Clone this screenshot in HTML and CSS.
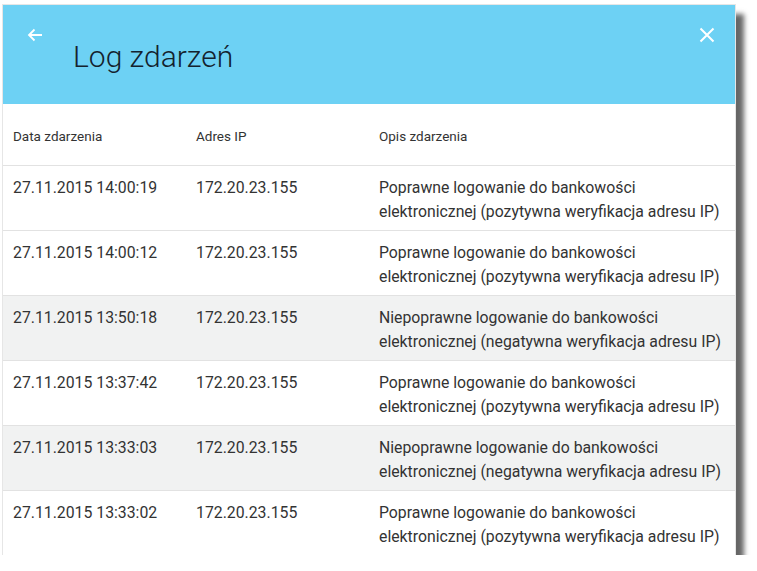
FILE: index.html
```html
<!DOCTYPE html>
<html lang="pl">
<head>
<meta charset="utf-8">
<title>Log zdarzeń</title>
<link rel="stylesheet" href="styles.css">
</head>
<body>
<div class="dialog">
  <header class="head">
    <button class="icon back" aria-label="Wstecz">
      <svg width="16" height="14" viewBox="0 0 16 14"><path d="M15 7H2M7.5 1.5L2 7l5.5 5.5" fill="none" stroke="#fff" stroke-width="1.8"/></svg>
    </button>
    <h1 class="title">Log zdarzeń</h1>
    <button class="icon close" aria-label="Zamknij">
      <svg width="16" height="16" viewBox="0 0 16 16"><path d="M1.5 1.5l13 13M14.5 1.5l-13 13" fill="none" stroke="#fff" stroke-width="2"/></svg>
    </button>
  </header>
  <div class="table">
    <div class="row thead">
      <div class="cell">Data zdarzenia</div>
      <div class="cell">Adres IP</div>
      <div class="cell">Opis zdarzenia</div>
    </div>
    <div class="row">
      <div class="cell">27.11.2015 14:00:19</div>
      <div class="cell">172.20.23.155</div>
      <div class="cell desc">Poprawne logowanie do bankowości<br>elektronicznej (pozytywna weryfikacja adresu IP)</div>
    </div>
    <div class="row">
      <div class="cell">27.11.2015 14:00:12</div>
      <div class="cell">172.20.23.155</div>
      <div class="cell desc">Poprawne logowanie do bankowości<br>elektronicznej (pozytywna weryfikacja adresu IP)</div>
    </div>
    <div class="row fail">
      <div class="cell">27.11.2015 13:50:18</div>
      <div class="cell">172.20.23.155</div>
      <div class="cell desc">Niepoprawne logowanie do bankowości<br>elektronicznej (negatywna weryfikacja adresu IP)</div>
    </div>
    <div class="row">
      <div class="cell">27.11.2015 13:37:42</div>
      <div class="cell">172.20.23.155</div>
      <div class="cell desc">Poprawne logowanie do bankowości<br>elektronicznej (pozytywna weryfikacja adresu IP)</div>
    </div>
    <div class="row fail">
      <div class="cell">27.11.2015 13:33:03</div>
      <div class="cell">172.20.23.155</div>
      <div class="cell desc">Niepoprawne logowanie do bankowości<br>elektronicznej (negatywna weryfikacja adresu IP)</div>
    </div>
    <div class="row">
      <div class="cell">27.11.2015 13:33:02</div>
      <div class="cell">172.20.23.155</div>
      <div class="cell desc">Poprawne logowanie do bankowości<br>elektronicznej (pozytywna weryfikacja adresu IP)</div>
    </div>
  </div>
</div>
</body>
</html>
```

FILE: styles.css
```css
html, body {
  margin: 0;
  padding: 0;
  background: #ffffff;
}
body {
  font-family: Roboto, "Liberation Sans", sans-serif;
  color: #333333;
  padding: 5px 0 0 3px;
}
.dialog {
  width: 732px;
  height: 550px;
  overflow: hidden;
  background: #ffffff;
  outline: 1px solid #e6e6e6;
  box-shadow: 9px 9px 5px rgba(0, 0, 0, 0.6);
}
.head {
  height: 99px;
  background: #6dd1f4;
  display: flex;
  align-items: flex-start;
  box-sizing: border-box;
  padding: 0 20px 0 24px;
}
.icon {
  border: 0;
  background: none;
  padding: 0;
  margin: 0;
  display: flex;
  cursor: pointer;
}
.back { margin-top: 23px; }
.close { margin-top: 22px; margin-left: auto; }
.title {
  margin: 34px 0 0 30px;
  font-weight: 300;
  font-size: 30px;
  line-height: 36px;
  color: #14222e;
}
.row {
  display: grid;
  grid-template-columns: 183px 183px 1fr;
  height: 65px;
  box-sizing: border-box;
  border-top: 1px solid #e2e2e2;
  font-size: 15.8px;
  line-height: 24px;
}
.row .cell {
  padding: 10px 10px 0 10px;
}
.row .desc {
  white-space: nowrap;
}
.row.thead {
  height: 61px;
  border-top: 0;
  font-size: 13.5px;
  line-height: 18px;
}
.row.thead .cell {
  padding-top: 23px;
}
.row.fail {
  background: #f1f2f2;
}
```
